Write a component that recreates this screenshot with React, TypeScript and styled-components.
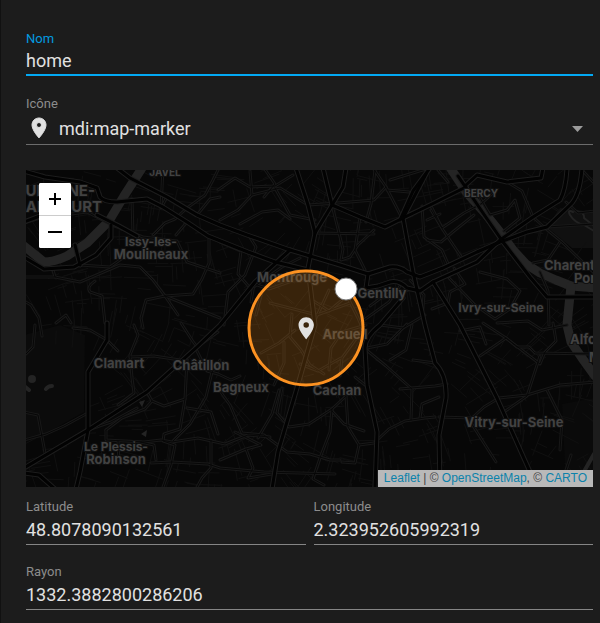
import React from "react";
import styled, { createGlobalStyle } from "styled-components";

const GlobalStyle = createGlobalStyle`
  * { box-sizing: border-box; }
  html, body { margin: 0; min-height: 100%; background: #1c1c1c; }
  body { font-family: Roboto, sans-serif; color: #e1e1e1; }
`;

const Panel = styled.main`
  min-height: 100vh;
  padding: 31px 7px 13px 25px;
  border-left: 1px solid #111111;
  background: #1c1c1c;
`;

const Form = styled.form`
  display: flex;
  flex-direction: column;
`;

const Field = styled.div<{ $gap?: number }>`
  display: flex;
  flex-direction: column;
  min-width: 0;
  margin-top: ${(p) => p.$gap ?? 0}px;
`;

const Label = styled.label<{ $active?: boolean }>`
  font-size: 13px;
  line-height: 16px;
  color: ${(p) => (p.$active ? "#039be0" : "#8c8c8c")};
`;

const TextInput = styled.input<{ $active?: boolean }>`
  width: 100%;
  height: ${(p) => (p.$active ? 29 : 30)}px;
  padding: 0;
  border: 0;
  border-bottom: ${(p) => (p.$active ? "2px solid #03a9f4" : "1px solid #858585")};
  border-radius: 0;
  outline: 0;
  background: transparent;
  color: #e1e1e1;
  font: 400 18px Roboto, sans-serif;
`;

const Combo = styled.div`
  display: flex;
  align-items: center;
  height: 33px;
  padding: 0 8px 0 1px;
  border-bottom: 1px solid #6c6c6c;
`;

const ComboSelect = styled.select`
  flex: 1;
  min-width: 0;
  height: 32px;
  margin-left: 8px;
  padding: 0;
  border: 0;
  outline: 0;
  appearance: none;
  background: transparent;
  color: #e1e1e1;
  font: 400 18px Roboto, sans-serif;
`;

const Columns = styled.div`
  display: grid;
  grid-template-columns: 1fr 1fr;
  column-gap: 8px;
  margin-top: 12px;
`;

const MapFrame = styled.section`
  position: relative;
  margin-top: 25px;
  overflow: hidden;
  background: #080808;
`;

const MapSvg = styled.svg`
  display: block;
  width: 100%;
  height: auto;
`;

const ZoomControl = styled.div`
  position: absolute;
  top: 13px;
  left: 13px;
  display: flex;
  flex-direction: column;
  width: 32px;
  overflow: hidden;
  border-radius: 2px;
  background: #ffffff;
`;

const ZoomButton = styled.button`
  display: grid;
  place-items: center;
  height: 32px;
  padding: 0;
  border: 0;
  background: #ffffff;
  color: #000000;
  & + & { height: 33px; border-top: 1px solid #cccccc; }
`;

const Attribution = styled.div`
  position: absolute;
  right: 0;
  bottom: 0;
  padding: 0 6px;
  background: #b9b9b9;
  color: #444444;
  font: 12px/17px "Liberation Sans", Arial, sans-serif;
  white-space: nowrap;
  a { color: #0b82ab; text-decoration: none; }
`;

const MARKER = "M12 2C8.1 2 5 5.1 5 9c0 5.2 7 13 7 13s7-7.8 7-13c0-3.900-3.100-7-7-7zm0 9.500a2.500 2.500 0 1 1 0-5 2.500 2.500 0 0 1 0 5z";

const WATER = [
  "M142 168L124 196L109 221L87 243L67 256Q54 262 44 262L24 246",
  "M449 166L467 193L484 212L500 232L513 250L526 264L540 273L556 280L571 286L595 288",
  "M571 286L569 305L567 325L571 342L582 358L595 376",
];

const MAJOR = [
  "M24 171L45 177L80 182L97 188L100 197Q104 202 117 202L147 199L163 207L187 222L208 236L248 252L275 262L308 270",
  "M117 168L130 178L167 197L197 215L220 225L247 235L290 250L340 265L368 274L390 267Q400 266 407 272L420 277L443 268L477 252L500 242L527 232L547 227L570 205Q580 196 582 168",
  "M296 168L308 205L315 233L308 268L315 325L297 388L278 452L272 489",
  "M323 168L332 205L315 233",
  "M346 168L343 187L332 205L360 217L385 227L403 218L426 174",
  "M403 218L413 272L425 325L435 363Q447 375 446 398L439 435L440 489",
  "M366 288L378 286L390 282Q399 280 407 288L420 291L433 282L477 262L500 240L533 217L560 200Q566 189 567 168",
  "M433 282L460 325L497 398L535 483",
  "M458 176L483 213L503 242L530 277L547 297L595 297",
  "M466 185L477 175L507 182L541 178L543 168",
  "M400 220L413 191L430 168M403 218L430 205L466 187",
  "M107 323V340L88 372V430L80 472L76 489",
  "M24 468L88 430L147 392L197 347L220 325L255 282L290 250",
  "M111 225L111 238L96 255L74 267L44 269L24 257",
  "M403 298L380 325Q365 337 365 348L367 385L377 432L375 489",
  "M368 274L366 288M75 245L80 265M24 222L40 216",
  "M24 473L39 475L55 489",
  "M97 215L119 226L137 236",
];

const SECONDARY = [
  "M24 223L40 218L87 212L112 225L143 237L177 241L187 262L220 273",
  "M53 270L55 277L80 282L120 265L140 267L153 280L165 296L178 315",
  "M95 281Q86 287 90 292L102 296L105 323",
  "M24 277L55 277M80 265L110 267L127 255",
  "M167 197L161 208L163 168M132 199L133 235",
  "M153 235L165 223L175 219L187 208L205 195L213 180L219 168",
  "M187 222L176 235M197 215L210 199L220 197M209 236V263L202 279L193 294L165 296",
  "M165 296L146 300L141 318L143 328M165 296L205 312L220 318",
  "M24 301L31 305L39 318L42 336M56 323L66 315L71 323",
  "M35 325L33 347L26 354M24 412L38 415L45 453",
  "M107 340L118 351M107 340L90 330L73 328",
  "M24 440L46 434L64 426L86 414M88 430L111 422L137 408",
  "M134 325L138 335L130 355L132 378L134 393L118 405",
  "M130 357L154 356L180 360M181 323L192 340L197 347L218 332",
  "M147 392L152 401L164 406L185 399L187 360",
  "M106 430V440L144 442L161 440L172 442L198 438L225 444L248 435L270 437",
  "M152 401L145 409L122 418L106 430M185 399L180 429L164 434L163 441L175 445L171 465L163 487",
  "M151 463L172 462L208 464L220 468L264 472L335 474",
  "M118 441L119 463M140 442L154 445L156 460",
  "M211 440V468L202 478L196 489M187 408L211 412L218 434",
  "M195 347L207 371L218 374L231 380L240 376",
  "M220 391L230 405L242 433L264 435L287 452L310 454L330 460L340 460",
  "M220 360L212 372L206 397L190 424L173 441",
  "M282 388L277 413L289 427L309 424L332 409L346 396",
  "M332 409L330 432L320 458L313 479L324 485",
  "M346 396L348 427L359 445L355 463L342 462",
  "M332 411L344 424L364 431M359 445L374 443L389 429L405 421L425 418L435 417",
  "M220 460L246 449L261 445L235 432M246 449L253 468L248 478L272 474",
  "M364 348L386 366L412 389L411 420M365 385L355 377M367 348L387 344L407 324",
  "M380 325L403 328L425 315M412 325L406 350L390 360",
  "M400 389L435 386L447 384M435 363L413 360",
  "M420 418L422 404L439 397M439 417L472 418L484 407L499 398L527 395L560 385L595 382",
  "M468 418L496 462M540 356L527 396L504 412",
  "M480 356L506 338L540 364L545 352L556 341L553 323M506 338L483 323",
  "M460 331L480 327L486 344M506 338L517 347L529 347L535 353L595 354",
  "M547 390L562 420L560 450M571 455L565 473L568 489",
  "M431 210L443 230L462 258M431 206L442 228L464 213L481 204L493 193",
  "M480 198L490 215L507 210L515 200L520 218L504 231",
  "M427 240L441 242L454 231L474 215M427 220L440 214",
  "M448 182L438 170M422 206L424 237L442 250L449 266",
  "M533 217L545 228L562 242L594 273M533 217L522 191L507 182",
  "M547 227L594 224M560 242L548 260L533 263",
  "M566 202L578 213L595 211M582 170L594 183",
  "M454 268L465 284L450 292L448 303L432 309",
  "M449 278L475 305L495 319L510 309L520 291L507 279L480 272",
  "M540 272L548 291L549 325M567 325L542 330L528 321L497 323",
  "M218 190L235 178L250 187L275 186L293 175M275 188L290 215L315 220",
  "M264 197L275 184L264 168M250 171L252 195L238 210L220 220",
  "M252 195L280 188L308 205L338 203L374 200L386 187L373 168",
  "M240 224L262 212L278 210L290 219M249 236L256 247L245 275L228 292L224 325",
  "M332 205L343 249L341 260L350 257L358 245L374 230",
  "M315 233L374 234M360 217L355 250L365 270M386 187L402 218",
  "M375 170L371 204L366 222M387 190L409 192M390 180L426 169",
  "M220 242L241 251L238 274L251 289M251 289L262 281L282 267L300 258",
  "M251 302L254 284L269 289L292 281L306 280",
  "M256 315L262 292L270 280M270 303L317 315L350 303",
  "M312 300L329 311L348 295M329 290L323 303L315 320",
  "M292 314L290 337L301 350L310 365L324 374",
  "M300 364L318 371L341 358M261 353L279 343L295 330",
  "M329 370L331 348L342 332L366 325M340 376L342 358L361 332",
  "M364 320L389 302L400 286M370 306L385 295L419 288",
  "M348 298L358 318L363 330M410 280L424 295L422 318",
  "M284 342L284 363L274 385M279 390L272 414L258 438",
];

/* Deterministic side streets that fill the blocks between the larger roads. */
function buildStreets(): string {
  let seed = 41;
  const next = () => {
    seed = (seed * 16807) % 2147483647;
    return seed / 2147483647;
  };
  let d = "";
  for (let i = 0; i < 900; i += 1) {
    const x = 26 + next() * 567;
    const y = 170 + next() * 317;
    const woods = x < 88 && y > 335 && y < 430;
    const park = x > 550 && y > 210 && y < 260;
    if (woods || park) continue;
    const tilt = Math.sin(x / 90) + Math.cos(y / 80) + (next() > 0.5 ? Math.PI / 2 : 0);
    const reach = 8 + next() * 22;
    const dx = Math.cos(tilt) * reach;
    const dy = Math.sin(tilt) * reach;
    d += `M${x.toFixed(1)} ${y.toFixed(1)}l${dx.toFixed(1)} ${dy.toFixed(1)}`;
  }
  return d;
}

const STREETS = buildStreets();

type Anchor = "start" | "middle" | "end";
const PLACES: { name: string; x: number; y: number; size?: number; anchor?: Anchor }[] = [
  { name: "BOULOGNE-", x: 95, y: 196, size: 15, anchor: "end" },
  { name: "BILLANCOURT", x: 102, y: 212, size: 15, anchor: "end" },
  { name: "JAVEL", x: 165, y: 176, size: 10 },
  { name: "BERCY", x: 481, y: 197, size: 10 },
  { name: "Issy-les-", x: 151, y: 246, size: 12 },
  { name: "Moulineaux", x: 151, y: 259 },
  { name: "Montrouge", x: 292, y: 282 },
  { name: "Gentilly", x: 382, y: 298 },
  { name: "Arcueil", x: 345, y: 339 },
  { name: "Cachan", x: 337, y: 395 },
  { name: "Bagneux", x: 241, y: 392 },
  { name: "Châtillon", x: 201, y: 370 },
  { name: "Clamart", x: 119, y: 368 },
  { name: "Le Plessis-", x: 116, y: 451, size: 12 },
  { name: "Robinson", x: 116, y: 464 },
  { name: "Vitry-sur-Seine", x: 514, y: 427 },
  { name: "Ivry-sur-Seine", x: 501, y: 312, size: 12 },
  { name: "Charenton-", x: 544, y: 270, anchor: "start" },
  { name: "Pont", x: 574, y: 283, anchor: "start" },
  { name: "Alfortville", x: 570, y: 344, anchor: "start" },
  { name: "Maisons", x: 589, y: 362, anchor: "start" },
];

const MapLabel = styled.text`
  fill: #424242;
  stroke: #101010;
  stroke-width: 2px;
  paint-order: stroke;
  font-family: Inter, sans-serif;
  font-weight: 700;
`;

function ZoneMap() {
  return (
    <MapSvg viewBox="26 170 567 317" role="img" aria-label="Carte de la zone">
      <rect x="26" y="170" width="567" height="317" fill="#070707" />
      <path d="M24 335L60 325L85 335L84 412L45 434L24 438Z" fill="#0b0b0b" />
      <path d="M547 227L560 208L594 212V248H572Z" fill="#101010" />
      <path d="M562 404L594 398V470L580 487H566Z" fill="#0a0a0a" />
      <g fill="none" strokeLinejoin="round" strokeLinecap="round">
        <path d={STREETS} stroke="#101010" strokeWidth="1" />
        {WATER.map((d) => (
          <path key={d} d={d} stroke="#242424" strokeWidth="9" />
        ))}
        <path d="M573 212q-6-3-3 3q5 8 14 10l10 6M575 211q10 1 9 7l10 8" stroke="#222222" strokeWidth="2" />
        <path d="M582 475L594 454M46 389q2-3 6-3M24 386l5 4" stroke="#242424" strokeWidth="4" />
        {SECONDARY.map((d) => (
          <path key={d} d={d} stroke="#181818" strokeWidth="3" />
        ))}
        {SECONDARY.map((d) => (
          <path key={d} d={d} stroke="#070707" strokeWidth="1" />
        ))}
        {MAJOR.map((d) => (
          <path key={d} d={d} stroke="#1d1d1d" strokeWidth="5" />
        ))}
        {MAJOR.map((d) => (
          <path key={d} d={d} stroke="#020202" strokeWidth="3" />
        ))}
      </g>
      <circle cx="32" cy="379" r="4" fill="#242424" />
      <path d="M141 434l6-4l-1 7zM139 402l6-2l-3 7z" fill="#242424" />
      {PLACES.map((p) => (
        <MapLabel key={p.name} x={p.x} y={p.y} fontSize={p.size ?? 13} textAnchor={p.anchor ?? "middle"}>
          {p.name}
        </MapLabel>
      ))}
      <circle cx="306" cy="328" r="57" fill="#ff9820" fillOpacity="0.2" stroke="#fc9222" strokeWidth="3" />
      <path d={MARKER} transform="translate(293 315) scale(1.1)" fill="#e1e1e1" />
      <circle cx="346" cy="289" r="11" fill="#ffffff" stroke="#777777" strokeWidth="1" />
    </MapSvg>
  );
}

export default function App() {
  return (
    <>
      <GlobalStyle />
      <Panel>
        <Form>
          <Field>
            <Label htmlFor="name" $active>Nom</Label>
            <TextInput id="name" defaultValue="home" $active />
          </Field>
          <Field $gap={20}>
            <Label htmlFor="icon">Icône</Label>
            <Combo>
              <svg width="24" height="24" viewBox="0 0 24 24" aria-hidden="true">
                <path d={MARKER} fill="#e1e1e1" stroke="#e1e1e1" strokeWidth="1" />
              </svg>
              <ComboSelect id="icon" defaultValue="mdi:map-marker">
                <option>mdi:map-marker</option>
              </ComboSelect>
              <svg width="14" height="8" viewBox="0 0 14 8" aria-hidden="true">
                <path d="M1 2h11L6.500 8z" fill="#9b9b9b" />
              </svg>
            </Combo>
          </Field>
          <MapFrame>
            <ZoneMap />
            <ZoomControl>
              <ZoomButton type="button" aria-label="Zoom avant">
                <svg width="14" height="14" viewBox="0 0 14 14" aria-hidden="true">
                  <path d="M7 1v12M1 7h12" stroke="currentColor" strokeWidth="2" />
                </svg>
              </ZoomButton>
              <ZoomButton type="button" aria-label="Zoom arrière">
                <svg width="14" height="14" viewBox="0 0 14 14" aria-hidden="true">
                  <path d="M0 7h14" stroke="currentColor" strokeWidth="2" />
                </svg>
              </ZoomButton>
            </ZoomControl>
            <Attribution>
              <a href="#leaflet">Leaflet</a> | © <a href="#openstreetmap">OpenStreetMap</a>, © <a href="#carto">CARTO</a>
            </Attribution>
          </MapFrame>
          <Columns>
            <Field>
              <Label htmlFor="latitude">Latitude</Label>
              <TextInput id="latitude" defaultValue="48.8078090132561" />
            </Field>
            <Field>
              <Label htmlFor="longitude">Longitude</Label>
              <TextInput id="longitude" defaultValue="2.323952605992319" />
            </Field>
          </Columns>
          <Field $gap={19}>
            <Label htmlFor="radius">Rayon</Label>
            <TextInput id="radius" defaultValue="1332.3882800286206" />
          </Field>
        </Form>
      </Panel>
    </>
  );
}
